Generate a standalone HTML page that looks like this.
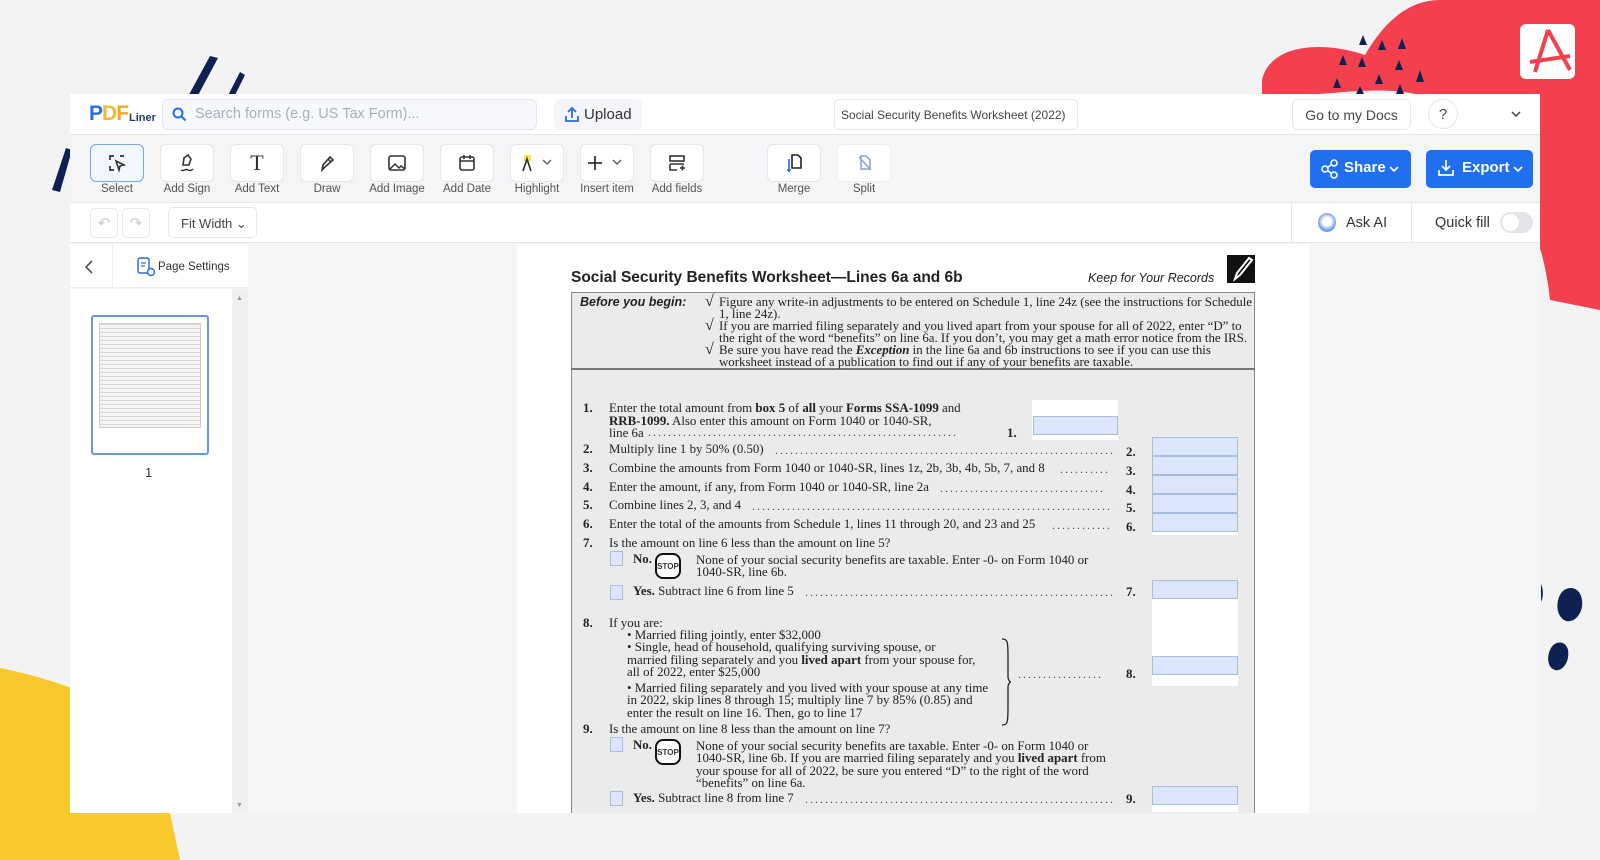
<!DOCTYPE html>
<html><head><meta charset="utf-8">
<style>
*{box-sizing:border-box;margin:0;padding:0}
body{width:1600px;height:860px;overflow:hidden;background:#f3f3f3;font-family:"Liberation Sans",sans-serif;position:relative;color:#333}
.a{position:absolute}
.btn{position:absolute;top:144px;width:54px;height:38px;border:1px solid #e4e6ea;border-radius:6px;background:#fff;display:flex;align-items:center;justify-content:center}
.lbl{position:absolute;top:183px;font-size:11.5px;color:#555;width:80px;text-align:center}
.f{position:absolute;font-family:"Liberation Serif",serif;font-size:12.9px;color:#222;white-space:nowrap;line-height:12.5px}
.dots{position:absolute;font-family:"Liberation Serif",serif;font-size:12px;color:#444;overflow:hidden;white-space:nowrap;letter-spacing:2px}
.box{position:absolute;background:#dbe6fb;border:1px solid #a9bde0;height:19px}
.cb{position:absolute;width:13px;height:15px;background:#dbe6fb;border:1px solid #a9bde0}
.stop{position:absolute;width:26px;height:26px;border:2px solid #111;border-radius:8px;font-size:8px;font-family:"Liberation Sans",sans-serif;font-weight:bold;display:flex;align-items:center;justify-content:center;background:#fff}
</style></head><body>

<svg class="a" style="left:0;top:0" width="1600" height="860">
<path d="M1262 80 C1270 45 1320 40 1365 55 C1385 20 1410 0 1440 0 L1600 0 L1600 310 L1550 300 C1540 200 1480 120 1420 95 C1380 85 1330 95 1300 95 L1262 95 Z" fill="#f4404e"/>
<g fill="#0f2150"><path d="M1363 35l4 10h-8z"/><path d="M1382 40l4 10h-8z"/><path d="M1402 38l4 11h-8z"/><path d="M1343 55l4 10h-8z"/><path d="M1362 57l4 10h-8z"/><path d="M1399 60l4 10h-8z"/><path d="M1337 78l4 10h-8z"/><path d="M1379 74l4 10h-8z"/><path d="M1420 70l4 12h-8z"/><path d="M1360 86l4 8h-8z"/><path d="M1400 84l4 10h-8z"/></g>
<rect x="1520" y="24" width="55" height="55" rx="6" fill="#fff"/>
<path d="M1548 30 L1535 72 M1548 30 L1570 70 M1530 62 L1570 56" stroke="#f4404e" stroke-width="4" fill="none"/>
<path d="M0 668 C60 680 150 710 170 760 L185 860 L0 860 Z" fill="#f8c92c"/>
<path d="M148 170 L210 56 L218 58 L158 170 Z M190 170 L240 72 L245 75 L198 170Z" fill="#0f2150"/>
<path d="M52 190 L66 148 L72 150 L60 192 Z" fill="#0f2150"/>
<path d="M1541 584 a8 14 0 0 1 0 18 z M1560 595 c5 -10 20 -10 22 5 c2 15 -10 25 -18 20 c-8 -5 -8 -18 -4 -25z M1550 650 c4 -10 16 -10 18 0 c2 12 -6 22 -13 20 c-8 -2 -8 -14 -5 -20z" fill="#0f2150"/>
</svg>

<div class="a" style="left:70px;top:94px;width:1470px;height:719px;background:#f4f5f7"></div>
<div class="a" style="left:70px;top:94px;width:1470px;height:41px;background:#fff;border-bottom:1px solid #e6e8ec"></div>
<div class="a" style="left:89px;top:102px;font-size:21px;font-weight:bold;color:#2a6de0;letter-spacing:-1px">P<span style="color:#f5b82e">D</span><span style="color:#f5a623">F</span></div>
<div class="a" style="left:129px;top:112px;font-size:11px;font-weight:bold;color:#1d3a6a">Liner</div>
<div class="a" style="left:162px;top:99px;width:375px;height:31px;border:1px solid #e1e6ee;border-radius:6px;background:#f6f8fb"></div>
<svg class="a" style="left:172px;top:107px" width="15" height="15"><circle cx="6" cy="6" r="4.5" stroke="#2a6de0" stroke-width="2" fill="none"/><path d="M9.5 9.5l4 4" stroke="#2a6de0" stroke-width="2"/></svg>
<div class="a" style="left:195px;top:106px;font-size:14.5px;color:#aab0bb">Search forms (e.g. US Tax Form)...</div>
<div class="a" style="left:554px;top:99px;width:88px;height:31px;border-radius:6px;background:#f3f5f8"></div>
<svg class="a" style="left:563px;top:105px" width="18" height="18"><path d="M9 13V3M5 7l4-4 4 4M3 11v5h12v-5" stroke="#2a6de0" stroke-width="1.8" fill="none"/></svg>
<div class="a" style="left:584px;top:106px;font-size:15px;color:#333">Upload</div>
<div class="a" style="left:834px;top:99px;width:244px;height:31px;border:1px solid #e5e7eb;border-radius:5px;font-size:12px;color:#444;padding:8px 0 0 6px">Social Security Benefits Worksheet (2022)</div>
<div class="a" style="left:1292px;top:99px;width:119px;height:31px;border:1px solid #e5e7eb;border-radius:6px;font-size:14px;color:#444;text-align:center;padding-top:7px">Go to my Docs</div>
<div class="a" style="left:1428px;top:99px;width:30px;height:30px;border:1px solid #e5e7eb;border-radius:50%;font-size:15px;text-align:center;padding-top:6px;color:#444">?</div>
<svg class="a" style="left:1510px;top:109px" width="12" height="10"><path d="M2 3l4 4 4-4" stroke="#444" stroke-width="1.5" fill="none"/></svg>

<div class="a" style="left:70px;top:202px;width:1470px;height:1px;background:#e6e8ec"></div>
<div class="btn" style="left:90px;border-color:#7fa6e4;background:#f2f6fd"><svg width="20" height="20"><path d="M3 7V3h4M3 13v4h4M13 3h4" stroke="#333" stroke-width="1.7" fill="none"/><path d="M9 8l8 4-4 1-1 4z" stroke="#333" stroke-width="1.6" fill="none"/></svg></div><div class="lbl" style="left:77px">Select</div>
<div class="btn" style="left:160px"><svg width="20" height="22"><path d="M6 13l1-7 4-3 3 4-2 6z" stroke="#333" stroke-width="1.6" fill="none"/><path d="M4 18c3 2 4-2 7 0 2 1 4 0 5-1" stroke="#333" stroke-width="1.5" fill="none"/></svg></div><div class="lbl" style="left:147px">Add Sign</div>
<div class="btn" style="left:230px"><span style="font-family:'Liberation Serif',serif;font-size:22px;color:#333">T</span></div><div class="lbl" style="left:217px">Add Text</div>
<div class="btn" style="left:300px"><svg width="20" height="20"><path d="M5 17l1-5 7-8 3 3-8 7z M11 6l3 3" stroke="#333" stroke-width="1.6" fill="none"/></svg></div><div class="lbl" style="left:287px">Draw</div>
<div class="btn" style="left:370px"><svg width="20" height="20"><rect x="2" y="3" width="16" height="14" rx="2" stroke="#333" stroke-width="1.6" fill="none"/><path d="M3 16l5-5 4 4 2-2 4 3" stroke="#333" stroke-width="1.5" fill="none"/></svg></div><div class="lbl" style="left:357px">Add Image</div>
<div class="btn" style="left:440px"><svg width="20" height="20"><rect x="3" y="4" width="14" height="13" rx="2" stroke="#333" stroke-width="1.6" fill="none"/><path d="M3 8h14M7 2v4M13 2v4" stroke="#333" stroke-width="1.6"/></svg></div><div class="lbl" style="left:427px">Add Date</div>
<div class="btn" style="left:510px"><svg width="44" height="22"><rect x="9" y="3" width="7" height="6" fill="#f5e94a"/><path d="M8 19l4-12 4 12" stroke="#333" stroke-width="1.7" fill="none"/><path d="M28 8l4 4 4-4" stroke="#555" stroke-width="1.3" fill="none"/></svg></div><div class="lbl" style="left:497px">Highlight</div>
<div class="btn" style="left:580px"><svg width="44" height="22"><path d="M10 4v14M3 11h14" stroke="#333" stroke-width="1.8"/><path d="M28 8l4 4 4-4" stroke="#555" stroke-width="1.3" fill="none"/></svg></div><div class="lbl" style="left:567px">Insert item</div>
<div class="btn" style="left:650px"><svg width="20" height="20"><rect x="3" y="3" width="14" height="5" stroke="#333" stroke-width="1.6" fill="none"/><path d="M3 11v6h7M3 11h14M13 15h5M15.5 12.5v5" stroke="#333" stroke-width="1.6" fill="none"/></svg></div><div class="lbl" style="left:637px">Add fields</div>
<div class="btn" style="left:767px"><svg width="20" height="22"><path d="M8 3h6l3 3v10H8z" stroke="#222" stroke-width="1.6" fill="none"/><path d="M5 7v9M3 18h4M5 16v4" stroke="#2a6de0" stroke-width="1.6"/></svg></div><div class="lbl" style="left:754px">Merge</div>
<div class="btn" style="left:837px;border-color:#eee"><svg width="20" height="22"><path d="M7 4h5l4 4v9H7z" stroke="#8aa2cc" stroke-width="1.5" fill="none"/><path d="M5 5l12 13" stroke="#8aa2cc" stroke-width="1.5"/></svg></div><div class="lbl" style="left:824px">Split</div>
<div class="a" style="left:1310px;top:150px;width:101px;height:38px;border-radius:5px;background:#1f6fee;color:#fff;font-size:15px;font-weight:bold;padding:9px 0 0 34px">Share</div>
<svg class="a" style="left:1320px;top:159px" width="20" height="20"><circle cx="5" cy="10" r="3" stroke="#fff" stroke-width="1.6" fill="none"/><circle cx="14" cy="4" r="3" stroke="#fff" stroke-width="1.6" fill="none"/><circle cx="14" cy="16" r="3" stroke="#fff" stroke-width="1.6" fill="none"/><path d="M7.5 8.5l4-3M7.5 11.5l4 3" stroke="#fff" stroke-width="1.5"/></svg>
<svg class="a" style="left:1388px;top:164px" width="12" height="10"><path d="M2 3l4 4 4-4" stroke="#fff" stroke-width="1.6" fill="none"/></svg>
<div class="a" style="left:1426px;top:150px;width:107px;height:38px;border-radius:5px;background:#1f6fee;color:#fff;font-size:15px;font-weight:bold;padding:9px 0 0 36px">Export</div>
<svg class="a" style="left:1436px;top:158px" width="20" height="20"><path d="M10 2v10M6 8l4 4 4-4M3 12v5h14v-5" stroke="#fff" stroke-width="1.7" fill="none"/></svg>
<svg class="a" style="left:1512px;top:164px" width="12" height="10"><path d="M2 3l4 4 4-4" stroke="#fff" stroke-width="1.6" fill="none"/></svg>

<div class="a" style="left:70px;top:203px;width:1470px;height:40px;background:#fff;border-bottom:1px solid #e6e8ec"></div>
<div class="a" style="left:90px;top:208px;width:28px;height:30px;border:1px solid #e8e8e8;border-radius:5px;color:#ccc;font-size:15px;text-align:center;padding-top:5px">↶</div>
<div class="a" style="left:122px;top:208px;width:28px;height:30px;border:1px solid #e8e8e8;border-radius:5px;color:#ccc;font-size:15px;text-align:center;padding-top:5px">↷</div>
<div class="a" style="left:168px;top:207px;width:89px;height:31px;border:1px solid #e5e7eb;border-radius:5px;font-size:13px;color:#444;padding:8px 0 0 12px">Fit Width ⌄</div>
<div class="a" style="left:1291px;top:203px;width:1px;height:40px;background:#e6e8ec"></div>
<div class="a" style="left:1411px;top:203px;width:1px;height:40px;background:#e6e8ec"></div>
<div class="a" style="left:1318px;top:213px;width:18px;height:19px;border-radius:50%;background:radial-gradient(circle at 50% 45%,#fff 30%,#7fa6f0 60%,#3d6fe0)"></div>
<div class="a" style="left:1346px;top:215px;font-size:14.5px;color:#333">Ask AI</div>
<div class="a" style="left:1435px;top:215px;font-size:14.5px;color:#333">Quick fill</div>
<div class="a" style="left:1500px;top:212px;width:33px;height:21px;border-radius:11px;background:#e3e4e7"></div>
<div class="a" style="left:1502px;top:214px;width:17px;height:17px;border-radius:50%;background:#fff"></div>

<div class="a" style="left:70px;top:244px;width:178px;height:44px;background:#fff;border-bottom:1px solid #eee"></div>
<div class="a" style="left:112px;top:244px;width:1px;height:44px;background:#eee"></div>
<svg class="a" style="left:84px;top:260px" width="10" height="14"><path d="M8 1L2 7l6 6" stroke="#555" stroke-width="1.6" fill="none"/></svg>
<svg class="a" style="left:136px;top:256px" width="20" height="22"><rect x="2" y="2" width="11" height="15" rx="2" stroke="#2a6de0" stroke-width="1.5" fill="none"/><path d="M5 7h5M5 10h4" stroke="#2a6de0" stroke-width="1.3"/><circle cx="15" cy="16" r="3.5" stroke="#2a6de0" stroke-width="1.5" fill="#fff"/></svg>
<div class="a" style="left:158px;top:261px;font-size:11.5px;color:#333">Page Settings</div>
<div class="a" style="left:70px;top:289px;width:162px;height:524px;background:#fff"></div>
<div class="a" style="left:232px;top:289px;width:16px;height:524px;background:#f0f0f0"></div>
<div class="a" style="left:236px;top:295px;font-size:7px;color:#999">▲</div>
<div class="a" style="left:236px;top:802px;font-size:7px;color:#999">▼</div>
<div class="a" style="left:91px;top:315px;width:118px;height:140px;border:2px solid #6b95de;border-radius:3px;background:#fff"></div>
<div class="a" style="left:99px;top:323px;width:102px;height:105px;background:repeating-linear-gradient(#d8d8d8 0 1px,#f4f4f4 1px 4px);border:1px solid #ccc"></div>
<div class="a" style="left:145px;top:465px;font-size:13px;color:#333">1</div>

<div class="a" style="left:517px;top:244px;width:792px;height:569px;background:#fff"></div>
<div class="a" style="left:571px;top:269px;font-size:15.5px;font-weight:bold;color:#222">Social Security Benefits Worksheet—Lines 6a and 6b</div>
<div class="a" style="left:1088px;top:271px;font-size:12.5px;font-style:italic;color:#222">Keep for Your Records</div>
<div class="a" style="left:1227px;top:255px;width:28px;height:28px;background:#111"></div>
<svg class="a" style="left:1227px;top:255px" width="28" height="28"><path d="M8 24l2-6 12-15 3 2-12 15z" stroke="#fff" stroke-width="2" fill="none"/></svg>

<div class="a" style="left:571px;top:292px;width:684px;height:521px;background:#ebebeb;border:1px solid #888;border-bottom:none"></div>
<div class="a" style="left:571px;top:368px;width:684px;height:2px;background:#777"></div>
<div class="a" style="left:580px;top:295px;font-size:12.5px;font-weight:bold;font-style:italic;color:#222">Before you begin:</div>
<div class="f" style="left:705px;top:296px;font-size:16px">√</div>
<div class="f" style="left:719px;top:296px;line-height:12px">Figure any write-in adjustments to be entered on Schedule 1, line 24z (see the instructions for Schedule<br>1, line 24z).</div>
<div class="f" style="left:705px;top:320px;font-size:16px">√</div>
<div class="f" style="left:719px;top:320px;line-height:12px">If you are married filing separately and you lived apart from your spouse for all of 2022, enter “D” to<br>the right of the word “benefits” on line 6a. If you don’t, you may get a math error notice from the IRS.</div>
<div class="f" style="left:705px;top:344px;font-size:16px">√</div>
<div class="f" style="left:719px;top:344px;line-height:12px">Be sure you have read the <b><i>Exception</i></b> in the line 6a and 6b instructions to see if you can use this<br>worksheet instead of a publication to find out if any of your benefits are taxable.</div>

<div class="a" style="left:1032px;top:400px;width:86px;height:40px;background:#fff"></div>
<div class="a" style="left:1152px;top:437px;width:86px;height:375px;background:#fff"></div>
<div class="a" style="left:1152px;top:535px;width:86px;height:46px;background:#ebebeb"></div>
<div class="a" style="left:1152px;top:686px;width:86px;height:100px;background:#ebebeb"></div>

<div class="f" style="left:583px;top:402px"><b>1.</b></div>
<div class="f" style="left:609px;top:402px">Enter the total amount from <b>box 5</b> of <b>all</b> your <b>Forms SSA-1099</b> and<br><b>RRB-1099.</b> Also enter this amount on Form 1040 or 1040-SR,<br>line 6a</div>
<div class="dots" style="left:648px;top:425px;width:345px">..............................................................</div>
<div class="f" style="left:1007px;top:427px"><b>1.</b></div>
<div class="box" style="left:1033px;top:416px;width:85px"></div>

<div class="f" style="left:583px;top:443px"><b>2.</b></div><div class="f" style="left:609px;top:443px">Multiply line 1 by 50% (0.50)</div><div class="dots" style="left:775px;top:443px;width:338px">.....................................................................</div><div class="f" style="left:1126px;top:446px"><b>2.</b></div><div class="box" style="left:1152px;top:437px;width:86px"></div>
<div class="f" style="left:583px;top:462px"><b>3.</b></div><div class="f" style="left:609px;top:462px">Combine the amounts from Form 1040 or 1040-SR, lines 1z, 2b, 3b, 4b, 5b, 7, and 8</div><div class="dots" style="left:1060px;top:462px;width:53px">..........</div><div class="f" style="left:1126px;top:465px"><b>3.</b></div><div class="box" style="left:1152px;top:456px;width:86px"></div>
<div class="f" style="left:583px;top:481px"><b>4.</b></div><div class="f" style="left:609px;top:481px">Enter the amount, if any, from Form 1040 or 1040-SR, line 2a</div><div class="dots" style="left:940px;top:481px;width:173px">.................................</div><div class="f" style="left:1126px;top:484px"><b>4.</b></div><div class="box" style="left:1152px;top:475px;width:86px"></div>
<div class="f" style="left:583px;top:499px"><b>5.</b></div><div class="f" style="left:609px;top:499px">Combine lines 2, 3, and 4</div><div class="dots" style="left:752px;top:499px;width:361px">..........................................................................</div><div class="f" style="left:1126px;top:502px"><b>5.</b></div><div class="box" style="left:1152px;top:494px;width:86px"></div>
<div class="f" style="left:583px;top:518px"><b>6.</b></div><div class="f" style="left:609px;top:518px">Enter the total of the amounts from Schedule 1, lines 11 through 20, and 23 and 25</div><div class="dots" style="left:1052px;top:518px;width:61px">............</div><div class="f" style="left:1126px;top:521px"><b>6.</b></div><div class="box" style="left:1152px;top:513px;width:86px"></div>

<div class="f" style="left:583px;top:537px"><b>7.</b></div><div class="f" style="left:609px;top:537px">Is the amount on line 6 less than the amount on line 5?</div>
<div class="cb" style="left:610px;top:551px"></div><div class="f" style="left:633px;top:553px"><b>No.</b></div><div class="stop" style="left:655px;top:553px">STOP</div>
<div class="f" style="left:696px;top:554px;line-height:12px">None of your social security benefits are taxable. Enter -0- on Form 1040 or<br>1040-SR, line 6b.</div>
<div class="cb" style="left:610px;top:585px"></div><div class="f" style="left:633px;top:585px"><b>Yes.</b> Subtract line 6 from line 5</div><div class="dots" style="left:805px;top:585px;width:308px">..............................................................</div><div class="f" style="left:1126px;top:586px"><b>7.</b></div><div class="box" style="left:1152px;top:580px;width:86px"></div>

<div class="f" style="left:583px;top:617px"><b>8.</b></div><div class="f" style="left:609px;top:617px">If you are:</div>
<div class="f" style="left:627px;top:629px;line-height:12.3px">• Married filing jointly, enter $32,000<br>• Single, head of household, qualifying surviving spouse, or<br>married filing separately and you <b>lived apart</b> from your spouse for,<br>all of 2022, enter $25,000</div>
<div class="f" style="left:627px;top:682px;line-height:12.3px">• Married filing separately and you lived with your spouse at any time<br>in 2022, skip lines 8 through 15; multiply line 7 by 85% (0.85) and<br>enter the result on line 16. Then, go to line 17</div>
<svg class="a" style="left:1000px;top:637px" width="12" height="90"><path d="M2 2c6 0 6 3 6 20v18c0 3 2 5 3 5c-1 0-3 2-3 5v18c0 17 0 20-6 20" stroke="#222" stroke-width="1.3" fill="none"/></svg>
<div class="dots" style="left:1018px;top:667px;width:95px">.................</div><div class="f" style="left:1126px;top:668px"><b>8.</b></div><div class="box" style="left:1152px;top:656px;width:86px"></div>

<div class="f" style="left:583px;top:723px"><b>9.</b></div><div class="f" style="left:609px;top:723px">Is the amount on line 8 less than the amount on line 7?</div>
<div class="cb" style="left:610px;top:737px"></div><div class="f" style="left:633px;top:739px"><b>No.</b></div><div class="stop" style="left:655px;top:739px">STOP</div>
<div class="f" style="left:696px;top:740px;line-height:12.3px">None of your social security benefits are taxable. Enter -0- on Form 1040 or<br>1040-SR, line 6b. If you are married filing separately and you <b>lived apart</b> from<br>your spouse for all of 2022, be sure you entered “D” to the right of the word<br>“benefits” on line 6a.</div>
<div class="cb" style="left:610px;top:791px"></div><div class="f" style="left:633px;top:792px"><b>Yes.</b> Subtract line 8 from line 7</div><div class="dots" style="left:805px;top:792px;width:308px">..............................................................</div><div class="f" style="left:1126px;top:793px"><b>9.</b></div><div class="box" style="left:1152px;top:786px;width:86px"></div>

<div class="a" style="left:0;top:813px;width:1600px;height:47px;background:#f3f3f3"></div>
<div class="a" style="left:0;top:813px;width:180px;height:47px;background:#f8c92c;clip-path:polygon(0 0,170px 0,180px 47px,0 47px)"></div>
</body></html>
